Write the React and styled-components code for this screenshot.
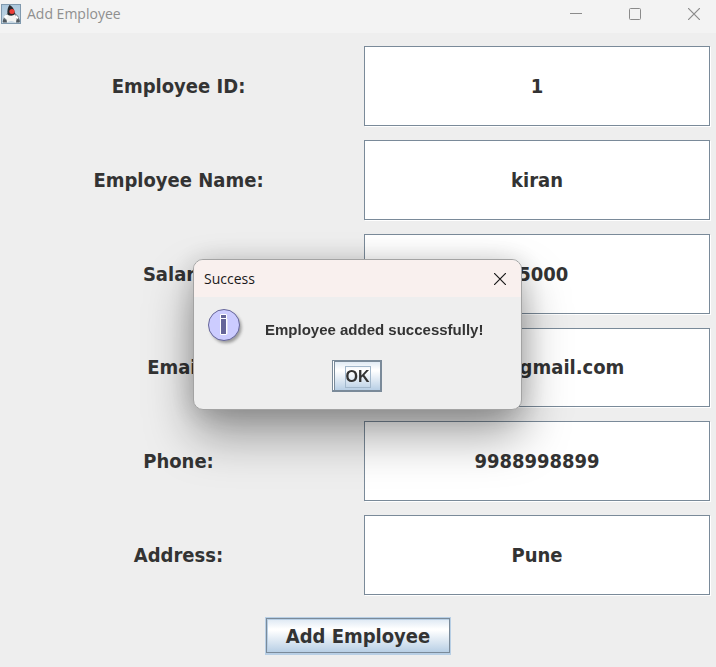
import React, { useState } from "react";
import styled, { createGlobalStyle } from "styled-components";

const GlobalStyle = createGlobalStyle`
  *, *::before, *::after { box-sizing: border-box; }
  body {
    margin: 0;
    background: #eeeeee;
    color: #333333;
    font-family: "DejaVu Sans Condensed", "DejaVu Sans", sans-serif;
  }
`;

const Frame = styled.div`
  display: flex;
  flex-direction: column;
  min-height: 100vh;
`;

const TitleBar = styled.header`
  display: flex;
  align-items: center;
  gap: 5px;
  height: 33px;
  padding: 0 10px 5px 1px;
  background: #f3f3f3;
`;

const Title = styled.h1`
  flex: 1;
  margin: 0;
  color: #8f8f8f;
  font: 400 14px/20px "Open Sans", sans-serif;
`;

const WindowControls = styled.div`
  display: flex;
  gap: 35px;
`;

const IconButton = styled.button`
  display: flex;
  align-items: center;
  justify-content: center;
  width: 24px;
  height: 24px;
  padding: 0;
  border: 0;
  background: transparent;
  color: ${({ $color }) => $color};
`;

const Form = styled.form`
  display: flex;
  flex: 1;
  flex-direction: column;
  align-items: center;
  gap: 21px;
  padding: 13px 5px;
`;

const Fields = styled.div`
  display: grid;
  flex: 1;
  align-self: stretch;
  grid-template-columns: 1fr 1fr;
  grid-auto-rows: 1fr;
  gap: 13px 12px;
`;

const Label = styled.label`
  display: flex;
  align-items: center;
  justify-content: center;
  padding-bottom: 1px;
  font: 700 20px/28px "DejaVu Sans Condensed", "DejaVu Sans", sans-serif;
`;

const Field = styled.input`
  width: calc(100% - 1px);
  min-width: 0;
  min-height: 40px;
  margin: 0 1px 1px 0;
  padding: 0;
  border: 1px solid #7a8a99;
  border-radius: 0;
  outline: 0;
  background: #ffffff;
  box-shadow: 1px 1px 0 #ffffff;
  color: #333333;
  font: 700 20px/28px "DejaVu Sans Condensed", "DejaVu Sans", sans-serif;
  text-align: center;
`;

const MetalButton = styled.button`
  border: 1px solid #7a8a99;
  border-radius: 0;
  background: linear-gradient(#dde8f3 0%, #ffffff 30%, #ffffff 34%, #b8cfe5 100%);
  color: #333333;
`;

const SubmitButton = styled(MetalButton)`
  height: 35px;
  margin: 1px;
  padding: 0 19px;
  box-shadow: inset 1px 1px 0 #b8cfe5, 0 0 0 1px #b8cfe5, 0 1px 0 1px #b8cfe5;
  font: 700 20px/28px "DejaVu Sans Condensed", "DejaVu Sans", sans-serif;
`;

const Overlay = styled.div`
  position: fixed;
  inset: 0;
  display: flex;
  align-items: center;
  justify-content: center;
  padding: 2px 1px 0 0;
`;

const Dialog = styled.section`
  width: 329px;
  max-width: 100%;
  border: 1px solid #a3a3a3;
  border-radius: 10px;
  overflow: hidden;
  background: #eeeeee;
  box-shadow: 0 26px 48px rgba(0, 0, 0, 0.36), 0 2px 28px rgba(0, 0, 0, 0.18);
`;

const DialogBar = styled.header`
  display: flex;
  align-items: center;
  justify-content: space-between;
  height: 37px;
  padding: 0 9px 0 10px;
  background: #f9f0ee;
`;

const DialogTitle = styled.h2`
  margin: 0;
  color: #191919;
  font: 400 14px/20px "Open Sans", sans-serif;
`;

const DialogBody = styled.div`
  display: flex;
  flex-direction: column;
  align-items: center;
  gap: 13px;
  padding: 8px 12px 17px 11px;
`;

const MessageRow = styled.div`
  display: flex;
  align-self: stretch;
  align-items: center;
  gap: 18px;
`;

const Message = styled.p`
  margin: 8px 0 0;
  font: 700 15px/20px "Liberation Sans", Arial, sans-serif;
`;

const OkButton = styled(MetalButton)`
  width: 50px;
  height: 32px;
  padding: 3px 0 0 2px;
  border-width: 1px 2px 2px 1px;
  box-shadow: inset 1px 0 0 #ffffff, inset 2px 0 0 #7a8a99, inset 0 1px 0 #7a8a99;
`;

const FocusRing = styled.span`
  display: inline-block;
  border: 1px solid #a3b8cc;
  font: 700 16px/20px "Liberation Sans", Arial, sans-serif;
`;

const JavaIcon = () => (
  <svg width="21" height="21" viewBox="0 0 21 21" aria-hidden="true">
    <defs>
      <linearGradient id="tile" x1="0" y1="0" x2="0" y2="1">
        <stop offset="0" stopColor="#a9c6dc" />
        <stop offset="1" stopColor="#c9d8e3" />
      </linearGradient>
    </defs>
    <rect x="0.5" y="0.5" width="19" height="19" fill="url(#tile)" stroke="#8099ae" />
    <path d="M7 9 3 13l-1.500 5H6l3-5zM13.500 8.500l4 4L19 18h-4l-3-5z" fill="#737a80" />
    <path d="M7 9.500c-1.500 2-3 5.500-2 8.500 2 .8 3-1 5-1s3.500 1.800 6 1c0-3.500-1-6-2.500-8.500z" fill="#f3f3f1" />
    <path d="M8.500 1c2.500 1 5 4 5.500 9-1.500 2-5.500 2.300-7.500.5C6 6 7 3 8.500 1z" fill="#29282b" />
    <ellipse cx="11" cy="7.500" rx="2.600" ry="2.500" fill="#ee3c36" />
    <path d="M2 15.500h3.500l.5 3H2zM15.500 15.500h3v3H15z" fill="#4f585f" />
    <path d="M2.500 13l2.500-2.500 2 1-2 3.500zM15 11l2.500 2.500-1 1.500-2-1.500z" fill="#ffffff" />
  </svg>
);

const MinimizeIcon = () => (
  <svg width="12" height="12" viewBox="0 0 12 12" aria-hidden="true">
    <path d="M0 5.500h12" stroke="currentColor" />
  </svg>
);

const MaximizeIcon = () => (
  <svg width="12" height="12" viewBox="0 0 12 12" aria-hidden="true">
    <rect x="0.500" y="0.500" width="11" height="11" rx="1" fill="none" stroke="currentColor" />
  </svg>
);

const CloseIcon = () => (
  <svg width="12" height="12" viewBox="0 0 12 12" aria-hidden="true">
    <path d="M0 0l12 12M12 0L0 12" stroke="currentColor" strokeWidth="1.200" />
  </svg>
);

const InfoIcon = () => (
  <svg width="42" height="42" viewBox="0 0 42 42" aria-hidden="true">
    <defs>
      <filter id="soft" x="-20%" y="-20%" width="140%" height="140%">
        <feGaussianBlur stdDeviation="1.400" />
      </filter>
    </defs>
    <circle cx="21" cy="22.500" r="15.500" fill="#777777" opacity="0.700" filter="url(#soft)" />
    <circle cx="19" cy="20" r="15.500" fill="#ccccff" stroke="#666699" />
    <path d="M15.500 9.500h6v4h-6zM15.500 13.500h6v16h-6z" fill="#666699" stroke="#ffffff" />
    <path d="M22.500 14v15" stroke="#e2e2ff" />
  </svg>
);

const fields = [
  { id: "employee-id", label: "Employee ID:", value: "1" },
  { id: "employee-name", label: "Employee Name:", value: "kiran" },
  { id: "salary", label: "Salary:", value: "25000" },
  { id: "email", label: "Email:", value: "kiran@gmail.com" },
  { id: "phone", label: "Phone:", value: "9988998899" },
  { id: "address", label: "Address:", value: "Pune" },
];

export default function App() {
  const [open, setOpen] = useState(true);

  const submit = (event) => {
    event.preventDefault();
    setOpen(true);
  };

  return (
    <>
      <GlobalStyle />
      <Frame>
        <TitleBar>
          <JavaIcon />
          <Title>Add Employee</Title>
          <WindowControls>
            <IconButton type="button" $color="#8b8b8b" aria-label="Minimize"><MinimizeIcon /></IconButton>
            <IconButton type="button" $color="#8b8b8b" aria-label="Maximize"><MaximizeIcon /></IconButton>
            <IconButton type="button" $color="#8b8b8b" aria-label="Close"><CloseIcon /></IconButton>
          </WindowControls>
        </TitleBar>
        <Form onSubmit={submit}>
          <Fields>
            {fields.map(({ id, label, value }) => (
              <React.Fragment key={id}>
                <Label htmlFor={id}>{label}</Label>
                <Field id={id} type="text" defaultValue={value} />
              </React.Fragment>
            ))}
          </Fields>
          <SubmitButton type="submit">Add Employee</SubmitButton>
        </Form>
      </Frame>
      {open && (
        <Overlay>
          <Dialog role="dialog" aria-modal="true" aria-labelledby="dialog-title">
            <DialogBar>
              <DialogTitle id="dialog-title">Success</DialogTitle>
              <IconButton type="button" $color="#1a1a1a" aria-label="Close dialog" onClick={() => setOpen(false)}>
                <CloseIcon />
              </IconButton>
            </DialogBar>
            <DialogBody>
              <MessageRow>
                <InfoIcon />
                <Message>Employee added successfully!</Message>
              </MessageRow>
              <OkButton type="button" onClick={() => setOpen(false)}>
                <FocusRing>OK</FocusRing>
              </OkButton>
            </DialogBody>
          </Dialog>
        </Overlay>
      )}
    </>
  );
}
